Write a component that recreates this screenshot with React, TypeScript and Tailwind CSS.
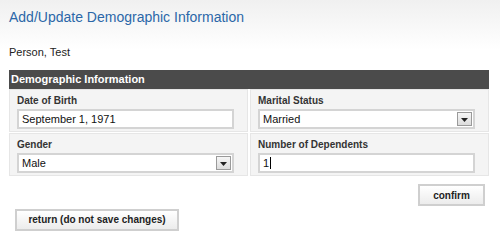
import React from "react";

const sans = "font-['Tahoma','Liberation_Sans',Arial,sans-serif]";

const Field = ({ label, children }: { label: string; children: React.ReactNode }) => (
  <div className="h-[43px] border border-[#e6e6e6] bg-[#f4f4f4] px-[7px] pt-[4px]">
    <div className="text-[10px] font-bold leading-[14px] text-[#333]">{label}</div>
    <div className="mt-px">{children}</div>
  </div>
);

const TextBox = ({ value, caret }: { value: string; caret?: boolean }) => (
  <div className="flex h-[20px] w-[217px] items-center border-2 border-[#d4d4d4] bg-white px-[3px] text-[11px] text-[#111]">
    {value}
    {caret && <span className="ml-px inline-block h-[12px] w-px bg-black" />}
  </div>
);

const SelectBox = ({ value }: { value: string }) => (
  <div className="flex h-[20px] w-[217px] items-center justify-between border-2 border-[#d4d4d4] bg-white pl-[3px] pr-px text-[11px] text-[#111]">
    <span>{value}</span>
    <span className="flex h-[14px] w-[15px] items-center justify-center border border-[#9a9a9a] bg-gradient-to-b from-[#f6f6f6] to-[#dcdcdc]">
      <svg width="7" height="5" viewBox="0 0 7 5">
        <path d="M0 1h7L3.5 5z" fill="#222" />
      </svg>
    </span>
  </div>
);

const Button = ({ children, className }: { children: React.ReactNode; className?: string }) => (
  <button
    className={`whitespace-nowrap border-2 border-[#cfcfcf] bg-gradient-to-b from-white to-[#ececec] text-[10px] font-bold text-[#222] ${className ?? ""}`}
  >
    {children}
  </button>
);

export default function App() {
  return (
    <div className={`h-[249px] w-[500px] bg-gradient-to-b from-[#f0f0f0] via-white via-20% to-white ${sans}`}>
      <div className="px-[9px] pt-[8px]">
        <h1 className="text-[14px] leading-[18px] text-[#2b67a8]">Add/Update Demographic Information</h1>
        <div className="mt-[20px] text-[11px] leading-[12px] text-[#222]">Person, Test</div>

        <div className="mt-[12px] w-[480px]">
          <div className="flex h-[19px] items-center bg-[#4b4b4b] px-[2px] text-[11px] font-bold text-white">
            Demographic Information
          </div>
          <div className="grid grid-cols-2 gap-x-[2px] gap-y-px bg-white">
            <Field label="Date of Birth">
              <TextBox value="September 1, 1971" />
            </Field>
            <Field label="Marital Status">
              <SelectBox value="Married" />
            </Field>
            <Field label="Gender">
              <SelectBox value="Male" />
            </Field>
            <Field label="Number of Dependents">
              <TextBox value="1" caret />
            </Field>
          </div>
          <div className="mt-[8px] flex justify-end pr-[4px]">
            <Button className="h-[22px] w-[67px]">confirm</Button>
          </div>
        </div>

        <Button className="mt-[2px] ml-[6px] h-[22px] w-[164px]">return (do not save changes)</Button>
      </div>
    </div>
  );
}
